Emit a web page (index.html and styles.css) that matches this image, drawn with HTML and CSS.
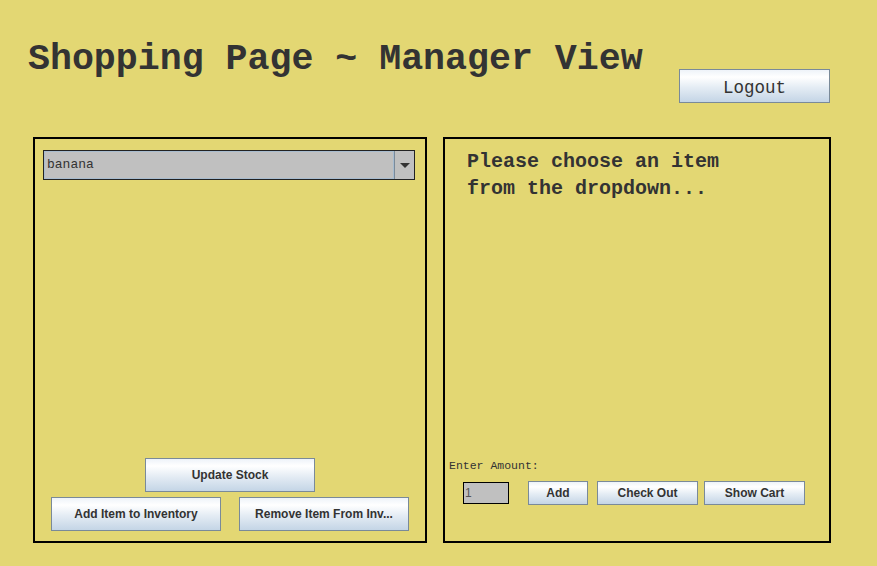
FILE: index.html
```html
<!DOCTYPE html>
<html>
<head>
<meta charset="utf-8">
<link rel="stylesheet" href="styles.css">
</head>
<body>
<div class="page">
  <div class="header">
    <h1 class="title">Shopping Page ~ Manager View</h1>
    <button class="btn logout">Logout</button>
  </div>
  <div class="panels">
    <div class="panel left">
      <div class="combo">
        <span class="combo-text">banana</span>
        <span class="combo-arrow"><svg width="10" height="6" viewBox="0 0 10 6"><path d="M0 0 H10 L5 5 Z" fill="#333"/></svg></span>
      </div>
      <div class="spacer"></div>
      <div class="left-actions">
        <button class="btn big">Update Stock</button>
        <div class="btn-row">
          <button class="btn big">Add Item to Inventory</button>
          <button class="btn big">Remove Item From Inv...</button>
        </div>
      </div>
    </div>
    <div class="panel right">
      <div class="message">Please choose an item<br>from the dropdown...</div>
      <div class="spacer"></div>
      <div class="amount-label">Enter Amount:</div>
      <div class="amount-row">
        <div class="field">1</div>
        <button class="btn small add">Add</button>
        <button class="btn small wide checkout">Check Out</button>
        <button class="btn small wide">Show Cart</button>
      </div>
    </div>
  </div>
</div>
</body>
</html>
```
FILE: styles.css
```css
html, body {
  margin: 0;
  padding: 0;
  background: #e3d773;
}
.page {
  width: 877px;
  height: 566px;
  background: #e3d773;
}
.header {
  display: flex;
  justify-content: space-between;
  align-items: flex-start;
  height: 95px;
  padding: 42px 47px 0 28px;
}
.title {
  margin: 0;
  font-family: "Liberation Mono", "Courier New", monospace;
  font-weight: bold;
  font-size: 36.6px;
  line-height: 1;
  color: #333333;
}
.btn {
  box-sizing: border-box;
  border: 1px solid #7a8a99;
  background: linear-gradient(to bottom, #eef3f9 0%, #ffffff 22%, #e4ecf4 55%, #c4d5e6 100%);
  color: #333333;
  padding: 0;
  margin: 0;
  font-family: "Liberation Sans", Arial, sans-serif;
  font-weight: bold;
  font-size: 12px;
  white-space: nowrap;
}
.logout {
  margin-top: 27px;
  width: 151px;
  height: 34px;
  font-family: "Liberation Mono", "Courier New", monospace;
  font-weight: normal;
  font-size: 17.5px;
  padding-top: 3px;
}
.panels {
  display: flex;
  gap: 16px;
  padding-left: 33px;
}
.panel {
  box-sizing: border-box;
  border: 2px solid #000000;
  height: 406px;
  display: flex;
  flex-direction: column;
}
.left {
  width: 394px;
  padding: 11px 10px 10px 8px;
}
.right {
  width: 388px;
  padding: 9px 10px 36px 4px;
}
.spacer {
  flex: 1;
}
.combo {
  box-sizing: border-box;
  height: 30px;
  width: 372px;
  border: 1px solid #222;
  background: #c0c0c0;
  display: flex;
  align-items: stretch;
}
.combo-text {
  flex: 1;
  border: 1px solid #a8bccf;
  font-family: "Liberation Mono", "Courier New", monospace;
  font-size: 13px;
  color: #333;
  padding-left: 2px;
  line-height: 26px;
}
.combo-arrow {
  width: 19px;
  border-left: 1px solid #7a8a99;
  display: flex;
  align-items: center;
  justify-content: center;
  padding-top: 1px;
}
.left-actions {
  display: flex;
  flex-direction: column;
  align-items: center;
  gap: 5px;
  padding-left: 2px;
}
.btn-row {
  display: flex;
  gap: 18px;
}
.big {
  width: 170px;
  height: 34px;
}
.message {
  padding-left: 18px;
  font-family: "Liberation Mono", "Courier New", monospace;
  font-weight: bold;
  font-size: 20px;
  line-height: 27px;
  color: #333333;
}
.amount-label {
  font-family: "Liberation Mono", "Courier New", monospace;
  font-size: 11.5px;
  line-height: 14px;
  color: #333333;
}
.amount-row {
  display: flex;
  align-items: center;
  margin-top: 8px;
  padding-left: 14px;
  height: 24px;
}
.field {
  box-sizing: border-box;
  width: 46px;
  height: 22px;
  border: 1px solid #000;
  background: #c0c0c0;
  font-family: "Liberation Sans", Arial, sans-serif;
  font-size: 12px;
  color: #555;
  line-height: 20px;
  padding-left: 1px;
  margin-right: 19px;
}
.small {
  height: 24px;
}
.add {
  width: 60px;
  margin-right: 9px;
}
.wide {
  width: 101px;
}
.checkout {
  margin-right: 6px;
}
```
